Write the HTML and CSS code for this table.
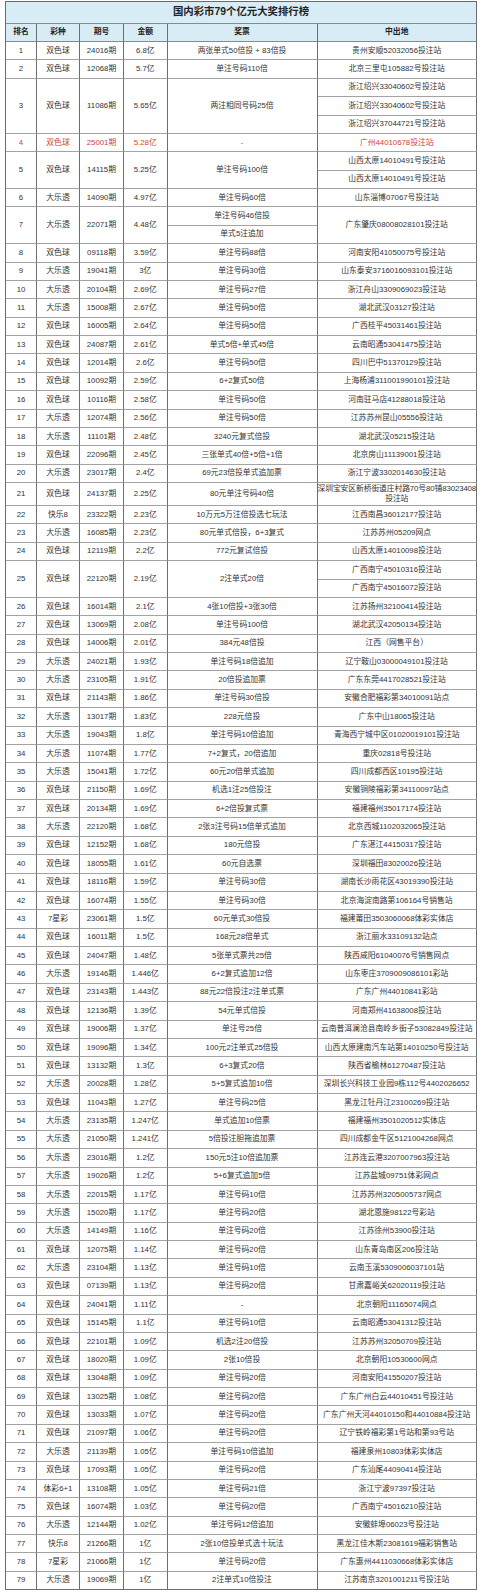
FILE: index.html
```html
<!DOCTYPE html>
<html lang="zh-CN">
<head>
<meta charset="utf-8">
<title>国内彩市79个亿元大奖排行榜</title>
<link rel="stylesheet" href="styles.css">
</head>
<body>
<div class="board" role="table">
<div class="row" role="row"><div class="c title" role="columnheader">国内彩市79个亿元大奖排行榜</div></div>
<div class="row head" role="row"><div class="c">排名</div><div class="c">彩种</div><div class="c">期号</div><div class="c">金额</div><div class="c">奖票</div><div class="c">中出地</div></div>
<div class="row"><div class="c">1</div><div class="c">双色球</div><div class="c">24016期</div><div class="c">6.8亿</div><div class="c">两张单式50倍投 + 83倍投</div><div class="c">贵州安顺52032056投注站</div></div>
<div class="row"><div class="c">2</div><div class="c">双色球</div><div class="c">12068期</div><div class="c">5.7亿</div><div class="c">单注号码110倍</div><div class="c">北京三里屯105882号投注站</div></div>
<div class="row"><div class="c s3">3</div><div class="c s3">双色球</div><div class="c s3">11086期</div><div class="c s3">5.65亿</div><div class="c s3">两注相同号码25倍</div><div class="c">浙江绍兴33040602号投注站</div></div>
<div class="row"><div class="c">浙江绍兴33040602号投注站</div></div>
<div class="row"><div class="c">浙江绍兴37044721号投注站</div></div>
<div class="row hot"><div class="c">4</div><div class="c">双色球</div><div class="c">25001期</div><div class="c">5.28亿</div><div class="c">-</div><div class="c">广州44010678投注站</div></div>
<div class="row"><div class="c s2">5</div><div class="c s2">双色球</div><div class="c s2">14115期</div><div class="c s2">5.25亿</div><div class="c s2">单注号码100倍</div><div class="c">山西太原14010491号投注站</div></div>
<div class="row"><div class="c">山西太原14010491号投注站</div></div>
<div class="row"><div class="c">6</div><div class="c">大乐透</div><div class="c">14090期</div><div class="c">4.97亿</div><div class="c">单注号码60倍</div><div class="c">山东淄博07067号投注站</div></div>
<div class="row"><div class="c s2">7</div><div class="c s2">大乐透</div><div class="c s2">22071期</div><div class="c s2">4.48亿</div><div class="c">单注号码46倍投</div><div class="c s2">广东肇庆08008028101投注站</div></div>
<div class="row"><div class="c">单式5注追加</div></div>
<div class="row"><div class="c">8</div><div class="c">双色球</div><div class="c">09118期</div><div class="c">3.59亿</div><div class="c">单注号码88倍</div><div class="c">河南安阳41050075号投注站</div></div>
<div class="row"><div class="c">9</div><div class="c">大乐透</div><div class="c">19041期</div><div class="c">3亿</div><div class="c">单注号码30倍</div><div class="c">山东泰安3716016093101投注站</div></div>
<div class="row"><div class="c">10</div><div class="c">大乐透</div><div class="c">20104期</div><div class="c">2.69亿</div><div class="c">单注号码27倍</div><div class="c">浙江舟山3309069023投注站</div></div>
<div class="row"><div class="c">11</div><div class="c">大乐透</div><div class="c">15008期</div><div class="c">2.67亿</div><div class="c">单注号码50倍</div><div class="c">湖北武汉03127投注站</div></div>
<div class="row"><div class="c">12</div><div class="c">双色球</div><div class="c">16005期</div><div class="c">2.64亿</div><div class="c">单注号码50倍</div><div class="c">广西桂平45031461投注站</div></div>
<div class="row"><div class="c">13</div><div class="c">双色球</div><div class="c">24087期</div><div class="c">2.61亿</div><div class="c">单式5倍+单式45倍</div><div class="c">云南昭通53041475投注站</div></div>
<div class="row"><div class="c">14</div><div class="c">双色球</div><div class="c">12014期</div><div class="c">2.6亿</div><div class="c">单注号码50倍</div><div class="c">四川巴中51370129投注站</div></div>
<div class="row"><div class="c">15</div><div class="c">双色球</div><div class="c">10092期</div><div class="c">2.59亿</div><div class="c">6+2复式50倍</div><div class="c">上海杨浦311001990101投注站</div></div>
<div class="row"><div class="c">16</div><div class="c">双色球</div><div class="c">10116期</div><div class="c">2.58亿</div><div class="c">单注号码50倍</div><div class="c">河南驻马店41288018投注站</div></div>
<div class="row"><div class="c">17</div><div class="c">大乐透</div><div class="c">12074期</div><div class="c">2.56亿</div><div class="c">单注号码50倍</div><div class="c">江苏苏州昆山05556投注站</div></div>
<div class="row"><div class="c">18</div><div class="c">大乐透</div><div class="c">11101期</div><div class="c">2.48亿</div><div class="c">3240元复式倍投</div><div class="c">湖北武汉05215投注站</div></div>
<div class="row"><div class="c">19</div><div class="c">双色球</div><div class="c">22096期</div><div class="c">2.45亿</div><div class="c">三张单式40倍+5倍+1倍</div><div class="c">北京房山11139001投注站</div></div>
<div class="row"><div class="c">20</div><div class="c">大乐透</div><div class="c">23017期</div><div class="c">2.4亿</div><div class="c">69元23倍投单式追加票</div><div class="c">浙江宁波3302014630投注站</div></div>
<div class="row"><div class="c">21</div><div class="c">双色球</div><div class="c">24137期</div><div class="c">2.25亿</div><div class="c">80元单注号码40倍</div><div class="c wrap">深圳宝安区新桥街道庄村路70号80铺83023408<br>投注站</div></div>
<div class="row"><div class="c">22</div><div class="c">快乐8</div><div class="c">23322期</div><div class="c">2.23亿</div><div class="c">10万元5万注倍投选七玩法</div><div class="c">江西南昌36012177投注站</div></div>
<div class="row"><div class="c">23</div><div class="c">大乐透</div><div class="c">16085期</div><div class="c">2.23亿</div><div class="c">80元单式倍投，6+3复式</div><div class="c">江苏苏州05209网点</div></div>
<div class="row"><div class="c">24</div><div class="c">双色球</div><div class="c">12119期</div><div class="c">2.2亿</div><div class="c">772元复试倍投</div><div class="c">山西太原14010098投注站</div></div>
<div class="row"><div class="c s2">25</div><div class="c s2">双色球</div><div class="c s2">22120期</div><div class="c s2">2.19亿</div><div class="c s2">2注单式20倍</div><div class="c">广西南宁45010316投注站</div></div>
<div class="row"><div class="c">广西南宁45016072投注站</div></div>
<div class="row"><div class="c">26</div><div class="c">双色球</div><div class="c">16014期</div><div class="c">2.1亿</div><div class="c">4张10倍投+3张30倍</div><div class="c">江苏扬州32100414投注站</div></div>
<div class="row"><div class="c">27</div><div class="c">双色球</div><div class="c">13069期</div><div class="c">2.08亿</div><div class="c">单注号码100倍</div><div class="c">湖北武汉42050134投注站</div></div>
<div class="row"><div class="c">28</div><div class="c">双色球</div><div class="c">14006期</div><div class="c">2.01亿</div><div class="c">384元48倍投</div><div class="c">江西（网售平台）</div></div>
<div class="row"><div class="c">29</div><div class="c">大乐透</div><div class="c">24021期</div><div class="c">1.93亿</div><div class="c">单注号码18倍追加</div><div class="c">辽宁鞍山03000049101投注站</div></div>
<div class="row"><div class="c">30</div><div class="c">大乐透</div><div class="c">23105期</div><div class="c">1.91亿</div><div class="c">20倍投追加票</div><div class="c">广东东莞4417028521投注站</div></div>
<div class="row"><div class="c">31</div><div class="c">双色球</div><div class="c">21143期</div><div class="c">1.86亿</div><div class="c">单注号码30倍投</div><div class="c">安徽合肥福彩第34010091站点</div></div>
<div class="row"><div class="c">32</div><div class="c">大乐透</div><div class="c">13017期</div><div class="c">1.83亿</div><div class="c">228元倍投</div><div class="c">广东中山18065投注站</div></div>
<div class="row"><div class="c">33</div><div class="c">大乐透</div><div class="c">19043期</div><div class="c">1.8亿</div><div class="c">单注号码10倍追加</div><div class="c">青海西宁城中区01020019101投注站</div></div>
<div class="row"><div class="c">34</div><div class="c">大乐透</div><div class="c">11074期</div><div class="c">1.77亿</div><div class="c">7+2复式，20倍追加</div><div class="c">重庆02818号投注站</div></div>
<div class="row"><div class="c">35</div><div class="c">大乐透</div><div class="c">15041期</div><div class="c">1.72亿</div><div class="c">60元20倍单式追加</div><div class="c">四川成都西区10195投注站</div></div>
<div class="row"><div class="c">36</div><div class="c">双色球</div><div class="c">21150期</div><div class="c">1.69亿</div><div class="c">机选1注25倍投注</div><div class="c">安徽铜陵福彩第34110097站点</div></div>
<div class="row"><div class="c">37</div><div class="c">双色球</div><div class="c">20134期</div><div class="c">1.69亿</div><div class="c">6+2倍投复式票</div><div class="c">福建福州35017174投注站</div></div>
<div class="row"><div class="c">38</div><div class="c">大乐透</div><div class="c">22120期</div><div class="c">1.68亿</div><div class="c">2张3注号码15倍单式追加</div><div class="c">北京西城1102032065投注站</div></div>
<div class="row"><div class="c">39</div><div class="c">双色球</div><div class="c">12152期</div><div class="c">1.68亿</div><div class="c">180元倍投</div><div class="c">广东湛江44150317投注站</div></div>
<div class="row"><div class="c">40</div><div class="c">双色球</div><div class="c">18055期</div><div class="c">1.61亿</div><div class="c">60元自选票</div><div class="c">深圳福田83020026投注站</div></div>
<div class="row"><div class="c">41</div><div class="c">双色球</div><div class="c">18116期</div><div class="c">1.59亿</div><div class="c">单注号码30倍</div><div class="c">湖南长沙雨花区43019390投注站</div></div>
<div class="row"><div class="c">42</div><div class="c">双色球</div><div class="c">16074期</div><div class="c">1.55亿</div><div class="c">单注号码30倍</div><div class="c">北京海淀南路第106164号销售站</div></div>
<div class="row"><div class="c">43</div><div class="c">7星彩</div><div class="c">23061期</div><div class="c">1.5亿</div><div class="c">60元单式30倍投</div><div class="c">福建莆田3503060068体彩实体店</div></div>
<div class="row"><div class="c">44</div><div class="c">双色球</div><div class="c">16011期</div><div class="c">1.5亿</div><div class="c">168元28倍单式</div><div class="c">浙江丽水33109132站点</div></div>
<div class="row"><div class="c">45</div><div class="c">双色球</div><div class="c">24047期</div><div class="c">1.48亿</div><div class="c">5张单式票共25倍</div><div class="c">陕西咸阳61040076号销售网点</div></div>
<div class="row"><div class="c">46</div><div class="c">大乐透</div><div class="c">19146期</div><div class="c">1.446亿</div><div class="c">6+2复式追加12倍</div><div class="c">山东枣庄3709009086101彩站</div></div>
<div class="row"><div class="c">47</div><div class="c">双色球</div><div class="c">23143期</div><div class="c">1.443亿</div><div class="c">88元22倍投注2注单式票</div><div class="c">广东广州44010841彩站</div></div>
<div class="row"><div class="c">48</div><div class="c">双色球</div><div class="c">12136期</div><div class="c">1.39亿</div><div class="c">54元单式倍投</div><div class="c">河南郑州41638008投注站</div></div>
<div class="row"><div class="c">49</div><div class="c">双色球</div><div class="c">19006期</div><div class="c">1.37亿</div><div class="c">单注号25倍</div><div class="c">云南普洱澜沧县南岭乡街子53082849投注站</div></div>
<div class="row"><div class="c">50</div><div class="c">双色球</div><div class="c">19096期</div><div class="c">1.34亿</div><div class="c">100元2注单式25倍投</div><div class="c">山西太原建南汽车站第14010250号投注站</div></div>
<div class="row"><div class="c">51</div><div class="c">双色球</div><div class="c">13132期</div><div class="c">1.3亿</div><div class="c">6+3复式20倍</div><div class="c">陕西省榆林61270487投注站</div></div>
<div class="row"><div class="c">52</div><div class="c">大乐透</div><div class="c">20028期</div><div class="c">1.28亿</div><div class="c">5+5复式追加10倍</div><div class="c">深圳长兴科技工业园9栋112号4402026652</div></div>
<div class="row"><div class="c">53</div><div class="c">双色球</div><div class="c">11043期</div><div class="c">1.27亿</div><div class="c">单注号码25倍</div><div class="c">黑龙江牡丹江23100269投注站</div></div>
<div class="row"><div class="c">54</div><div class="c">大乐透</div><div class="c">23135期</div><div class="c">1.247亿</div><div class="c">单式追加10倍票</div><div class="c">福建福州3501020512实体店</div></div>
<div class="row"><div class="c">55</div><div class="c">大乐透</div><div class="c">21050期</div><div class="c">1.241亿</div><div class="c">5倍投注胆拖追加票</div><div class="c">四川成都金牛区5121004268网点</div></div>
<div class="row"><div class="c">56</div><div class="c">大乐透</div><div class="c">23016期</div><div class="c">1.2亿</div><div class="c">150元5注10倍追加票</div><div class="c">江苏连云港3207007963投注站</div></div>
<div class="row"><div class="c">57</div><div class="c">大乐透</div><div class="c">19026期</div><div class="c">1.2亿</div><div class="c">5+6复式追加5倍</div><div class="c">江苏盐城09751体彩网点</div></div>
<div class="row"><div class="c">58</div><div class="c">大乐透</div><div class="c">22015期</div><div class="c">1.17亿</div><div class="c">单注号码10倍</div><div class="c">江苏苏州3205005737网点</div></div>
<div class="row"><div class="c">59</div><div class="c">大乐透</div><div class="c">15020期</div><div class="c">1.17亿</div><div class="c">单注号码20倍</div><div class="c">湖北恩施98122号彩站</div></div>
<div class="row"><div class="c">60</div><div class="c">大乐透</div><div class="c">14149期</div><div class="c">1.16亿</div><div class="c">单注号码20倍</div><div class="c">江苏徐州53900投注站</div></div>
<div class="row"><div class="c">61</div><div class="c">双色球</div><div class="c">12075期</div><div class="c">1.14亿</div><div class="c">单注号码20倍</div><div class="c">山东青岛南区206投注站</div></div>
<div class="row"><div class="c">62</div><div class="c">大乐透</div><div class="c">23104期</div><div class="c">1.13亿</div><div class="c">单注号码10倍</div><div class="c">云南玉溪5309006037101站</div></div>
<div class="row"><div class="c">63</div><div class="c">双色球</div><div class="c">07139期</div><div class="c">1.13亿</div><div class="c">单注号码20倍</div><div class="c">甘肃嘉峪关62020119投注站</div></div>
<div class="row"><div class="c">64</div><div class="c">双色球</div><div class="c">24041期</div><div class="c">1.11亿</div><div class="c">-</div><div class="c">北京朝阳11165074网点</div></div>
<div class="row"><div class="c">65</div><div class="c">双色球</div><div class="c">15145期</div><div class="c">1.1亿</div><div class="c">单注号码10倍</div><div class="c">云南昭通53041312投注站</div></div>
<div class="row"><div class="c">66</div><div class="c">双色球</div><div class="c">22101期</div><div class="c">1.09亿</div><div class="c">机选2注20倍投</div><div class="c">江苏苏州32050709投注站</div></div>
<div class="row"><div class="c">67</div><div class="c">双色球</div><div class="c">18020期</div><div class="c">1.09亿</div><div class="c">2张10倍投</div><div class="c">北京朝阳10530600网点</div></div>
<div class="row"><div class="c">68</div><div class="c">双色球</div><div class="c">13048期</div><div class="c">1.09亿</div><div class="c">单注号码20倍</div><div class="c">河南安阳41550207投注站</div></div>
<div class="row"><div class="c">69</div><div class="c">双色球</div><div class="c">13025期</div><div class="c">1.08亿</div><div class="c">单注号码20倍</div><div class="c">广东广州白云44010451号投注站</div></div>
<div class="row"><div class="c">70</div><div class="c">双色球</div><div class="c">13033期</div><div class="c">1.07亿</div><div class="c">单注号码20倍</div><div class="c">广东广州天河44010150和44010884投注站</div></div>
<div class="row"><div class="c">71</div><div class="c">双色球</div><div class="c">21097期</div><div class="c">1.06亿</div><div class="c">单注号码20倍</div><div class="c">辽宁铁岭福彩第1号站和第93号站</div></div>
<div class="row"><div class="c">72</div><div class="c">大乐透</div><div class="c">21139期</div><div class="c">1.05亿</div><div class="c">单注号码10倍追加</div><div class="c">福建泉州10803体彩实体店</div></div>
<div class="row"><div class="c">73</div><div class="c">双色球</div><div class="c">17093期</div><div class="c">1.05亿</div><div class="c">单注号码20倍</div><div class="c">广东汕尾44090414投注站</div></div>
<div class="row"><div class="c">74</div><div class="c">体彩6+1</div><div class="c">13108期</div><div class="c">1.05亿</div><div class="c">单注号码21倍</div><div class="c">浙江宁波97397投注站</div></div>
<div class="row"><div class="c">75</div><div class="c">双色球</div><div class="c">16074期</div><div class="c">1.03亿</div><div class="c">单注号码20倍</div><div class="c">广西南宁45016210投注站</div></div>
<div class="row"><div class="c">76</div><div class="c">大乐透</div><div class="c">12144期</div><div class="c">1.02亿</div><div class="c">单注号码12倍追加</div><div class="c">安徽蚌埠06023号投注站</div></div>
<div class="row"><div class="c">77</div><div class="c">快乐8</div><div class="c">21266期</div><div class="c">1亿</div><div class="c">2张10倍投单式选十玩法</div><div class="c">黑龙江佳木斯23081619福彩销售站</div></div>
<div class="row"><div class="c">78</div><div class="c">7星彩</div><div class="c">21066期</div><div class="c">1亿</div><div class="c">单注号码20倍</div><div class="c">广东惠州4411030668体彩实体店</div></div>
<div class="row"><div class="c">79</div><div class="c">大乐透</div><div class="c">19069期</div><div class="c">1亿</div><div class="c">2注单式10倍投注</div><div class="c">江苏南京3201001211号投注站</div></div>
</div>
</body>
</html>
```

FILE: styles.css
```css
html, body {
  margin: 0;
  padding: 0;
  background: #ffffff;
}

body {
  font-family: "Liberation Sans", "Noto Sans CJK SC", sans-serif;
}

.board {
  display: grid;
  grid-template-columns: 31px 43px 44px 43.5px 150px 159.5px;
  grid-template-rows: 21.5px 18.5px repeat(24, 18.38px) 23px;
  grid-auto-rows: 18.38px;
  width: max-content;
  margin: 1px 0 0 5px;
  border-left: 1px solid #6a6a6a;
  border-top: 1px solid #6a6a6a;
  font-size: 7.8px;
  color: #333333;
}

.row {
  display: contents;
}

.c {
  box-sizing: border-box;
  display: flex;
  align-items: center;
  justify-content: center;
  text-align: center;
  line-height: 10px;
  white-space: nowrap;
  border-right: 1px solid #6e6e6e;
  border-bottom: 1px solid #a3a3a3;
  min-width: 0;
}

.s2 {
  grid-row: span 2;
}

.s3 {
  grid-row: span 3;
}

.wrap {
  display: block;
  padding-top: 1px;
  letter-spacing: -0.1px;
  overflow: visible;
}

.title {
  grid-column: 1 / -1;
  background: #d8ecf6;
  font-size: 10.4px;
  font-weight: bold;
  color: #222222;
  border-bottom: 1px solid #8a8a8a;
}

.head .c {
  background: #d8ecf6;
  font-weight: bold;
  color: #222222;
  border-bottom: 1px solid #8a8a8a;
}

.hot .c {
  color: #d0433a;
}

.row:last-child .c {
  border-bottom-color: #6e6e6e;
}
```
